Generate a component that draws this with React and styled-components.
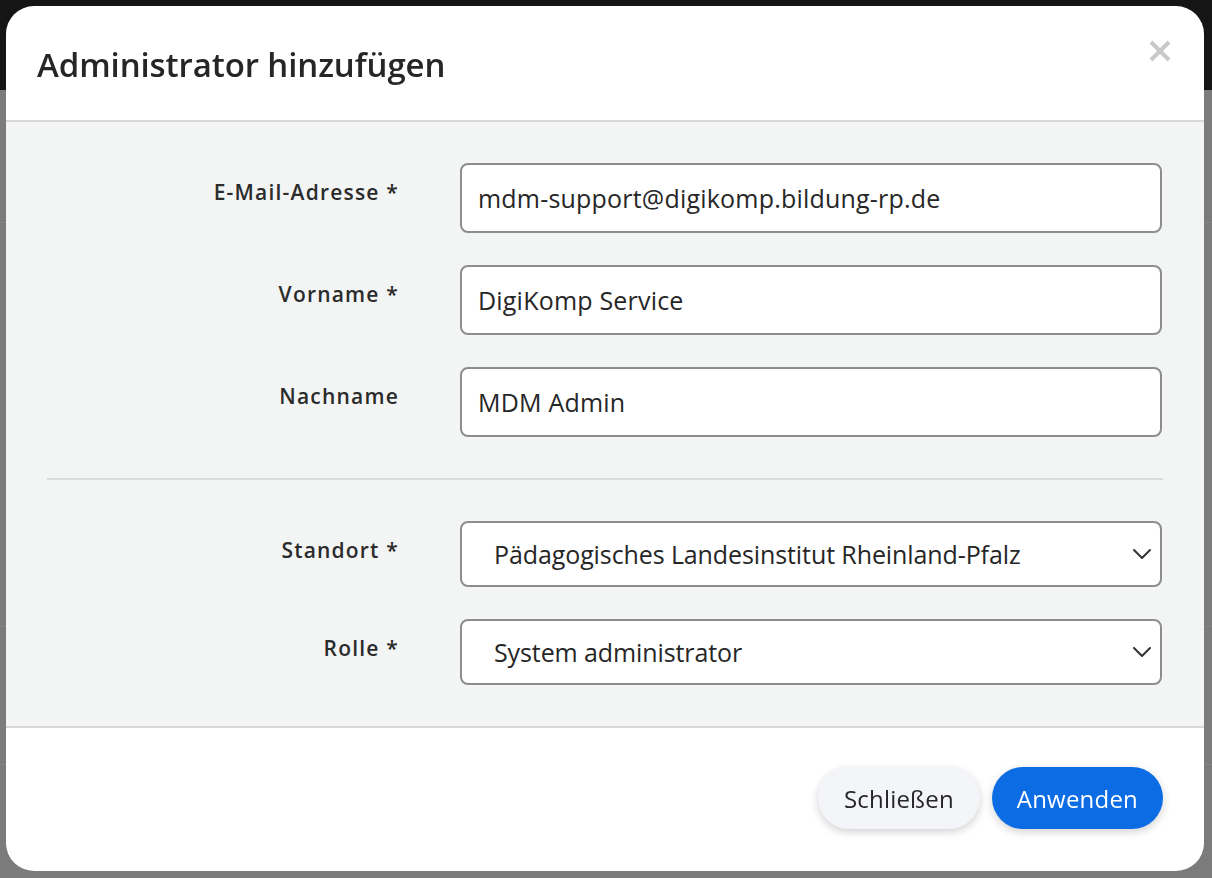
import React from 'react';
import styled, { createGlobalStyle } from 'styled-components';

const GlobalStyle = createGlobalStyle`
  html, body {
    margin: 0;
    padding: 0;
    height: 100%;
  }
  body {
    font-family: "Open Sans", "Liberation Sans", sans-serif;
    background: #7b7b7b;
    overflow: hidden;
  }
`;

const Page = styled.div`
  height: 878px;
  display: flex;
  flex-direction: column;
`;

const TopBar = styled.div`
  height: 90px;
  background: #151515;
`;

const PageRow = styled.div`
  height: ${p => p.h}px;
  border-bottom: 1px solid #858585;
`;

const Backdrop = styled.div`
  position: fixed;
  inset: 0;
  display: flex;
  padding: 6px 8px 7px 6px;
`;

const Modal = styled.div`
  flex: 1;
  background: #fff;
  border-radius: 28px;
  display: flex;
  flex-direction: column;
  overflow: hidden;
`;

const Header = styled.div`
  height: 116px;
  box-sizing: border-box;
  flex-shrink: 0;
  display: flex;
  align-items: center;
  justify-content: space-between;
  padding: 0 32px 0 31px;
  border-bottom: 2px solid #d8d8d8;
`;

const Title = styled.h2`
  margin: 0;
  margin-top: 2px;
  font-size: 33px;
  font-weight: 600;
  letter-spacing: -0.1px;
  color: #262626;
`;

const CloseBtn = styled.button`
  border: 0;
  background: none;
  padding: 0;
  width: 22px;
  height: 22px;
  margin-top: -24px;
  margin-right: 1px;
  cursor: pointer;
  display: flex;
`;

const Body = styled.div`
  flex: 1;
  background: #f3f5f5;
  padding: 41px 41px 0 41px;
  border-bottom: 2px solid #d8d8d8;
`;

const Row = styled.div`
  display: grid;
  grid-template-columns: 352px 702px;
  column-gap: 61px;
  align-items: start;
  margin-bottom: ${p => p.mb}px;
`;

const Label = styled.label`
  text-align: right;
  font-size: 21px;
  font-weight: 600;
  letter-spacing: 1.2px;
  color: #2b2b2b;
  padding-top: ${p => p.pt}px;
`;

const Input = styled.div`
  height: 70px;
  box-sizing: border-box;
  border: 2px solid #8d8d8d;
  border-radius: 8px;
  background: #fff;
  display: flex;
  align-items: center;
  padding: 0 16px;
  font-size: 25px;
  letter-spacing: 0.2px;
  color: #262626;
`;

const Select = styled(Input)`
  height: 66px;
  padding: 0 8px 0 32px;
  justify-content: space-between;
  letter-spacing: -0.1px;
`;

const Divider = styled.hr`
  margin: 0 0 41px 0;
  border: 0;
  border-top: 2px solid #d9dbdb;
  width: 1116px;
`;

const Footer = styled.div`
  height: 143px;
  box-sizing: border-box;
  flex-shrink: 0;
  display: flex;
  justify-content: flex-end;
  align-items: flex-start;
  gap: 12px;
  padding: 39px 41px 0 0;
`;

const Button = styled.button`
  height: 62px;
  border-radius: 31px;
  border: 0;
  font-family: inherit;
  font-size: 24px;
  letter-spacing: 0.2px;
  padding: 0 ${p => p.px}px;
  cursor: pointer;
  background: ${p => (p.primary ? '#0c6ce3' : '#f3f5f8')};
  color: ${p => (p.primary ? '#fff' : '#262626')};
  box-shadow: 0 3px 8px rgba(0, 0, 0, 0.18);
`;

const Chevron = () => (
  <svg width="20" height="12" viewBox="0 0 20 12" fill="none">
    <path d="M2 2l8 8 8-8" stroke="#333" strokeWidth="2" strokeLinecap="round" strokeLinejoin="round" />
  </svg>
);

const XIcon = () => (
  <svg width="22" height="22" viewBox="0 0 22 22" fill="none">
    <path d="M2 2l18 18M20 2L2 20" stroke="#c9c9c9" strokeWidth="4" />
  </svg>
);

export default function App() {
  return (
    <>
      <GlobalStyle />
      <Page>
        <TopBar />
        <PageRow h={132} />
        <PageRow h={403} />
        <PageRow h={137} />
      </Page>
      <Backdrop>
        <Modal>
          <Header>
            <Title>Administrator hinzufügen</Title>
            <CloseBtn aria-label="close"><XIcon /></CloseBtn>
          </Header>
          <Body>
            <Row mb={32}>
              <Label pt={15}>E-Mail-Adresse *</Label>
              <Input>mdm-support@digikomp.bildung-rp.de</Input>
            </Row>
            <Row mb={32}>
              <Label pt={15}>Vorname *</Label>
              <Input>DigiKomp Service</Input>
            </Row>
            <Row mb={41}>
              <Label pt={15}>Nachname</Label>
              <Input>MDM Admin</Input>
            </Row>
            <Divider />
            <Row mb={32}>
              <Label pt={15}>Standort *</Label>
              <Select>
                Pädagogisches Landesinstitut Rheinland-Pfalz
                <Chevron />
              </Select>
            </Row>
            <Row mb={0}>
              <Label pt={15}>Rolle *</Label>
              <Select>
                System administrator
                <Chevron />
              </Select>
            </Row>
          </Body>
          <Footer>
            <Button px={26}>Schließen</Button>
            <Button primary px={25}>Anwenden</Button>
          </Footer>
        </Modal>
      </Backdrop>
    </>
  );
}
